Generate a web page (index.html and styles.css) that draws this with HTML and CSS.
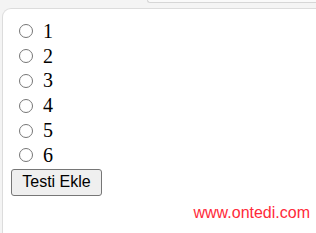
FILE: index.html
```html
<!DOCTYPE html>
<html>
<head>
    <meta name="viewport" content="width=device-width, initial-scale=1.0">
    <link rel="stylesheet" href="styles.css">
</head>
<body>
    <div class="top-strip">
        <div class="tab-edge"></div>
    </div>
    <div class="panel">
        <form class="test-form">
            <label class="choice"><input type="radio" name="test" value="1"> 1</label>
            <label class="choice"><input type="radio" name="test" value="2"> 2</label>
            <label class="choice"><input type="radio" name="test" value="3"> 3</label>
            <label class="choice"><input type="radio" name="test" value="4"> 4</label>
            <label class="choice"><input type="radio" name="test" value="5"> 5</label>
            <label class="choice"><input type="radio" name="test" value="6"> 6</label>
            <button type="button" class="add-btn">Testi Ekle</button>
        </form>
    </div>
    <div class="watermark">www.ontedi.com</div>
</body>
</html>
```

FILE: styles.css
```css
html, body {
    margin: 0;
    height: 100%;
    overflow: hidden;
}
body {
    background: #f4f4f4;
    font-family: "Liberation Serif", "Times New Roman", serif;
    position: relative;
}
.top-strip {
    height: 8px;
    display: flex;
    justify-content: flex-end;
}
.tab-edge {
    width: 168px;
    height: 2px;
    border-bottom: 1px solid #d6d6d6;
    border-left: 1px solid #d6d6d6;
    border-bottom-left-radius: 6px;
    background: #f9f9f9;
}
.panel {
    box-sizing: border-box;
    margin-left: 2px;
    height: calc(100% - 8px);
    background: #fff;
    border: 1px solid #dcdcdc;
    border-right: none;
    border-bottom: none;
    border-top-left-radius: 9px;
    padding: 10px 0 0 8px;
}
.test-form {
    display: flex;
    flex-direction: column;
    align-items: flex-start;
}
.choice {
    display: flex;
    align-items: center;
    height: 24.8px;
    font-size: 20px;
    color: #000;
}
.choice input {
    width: 14px;
    height: 14px;
    margin: 0 10px 0 8px;
}
.add-btn {
    margin-top: 1px;
    font-family: "Liberation Sans", Arial, sans-serif;
    font-size: 16px;
    padding: 2px 8px;
    height: 27px;
    width: 91px;
    color: #000;
    background: #efefef;
    border: 1px solid #767676;
    border-radius: 3px;
}
.watermark {
    position: absolute;
    right: 6px;
    top: 204px;
    color: #ff2a3a;
    font-family: "Liberation Sans", Arial, sans-serif;
    font-size: 16px;
}
```
